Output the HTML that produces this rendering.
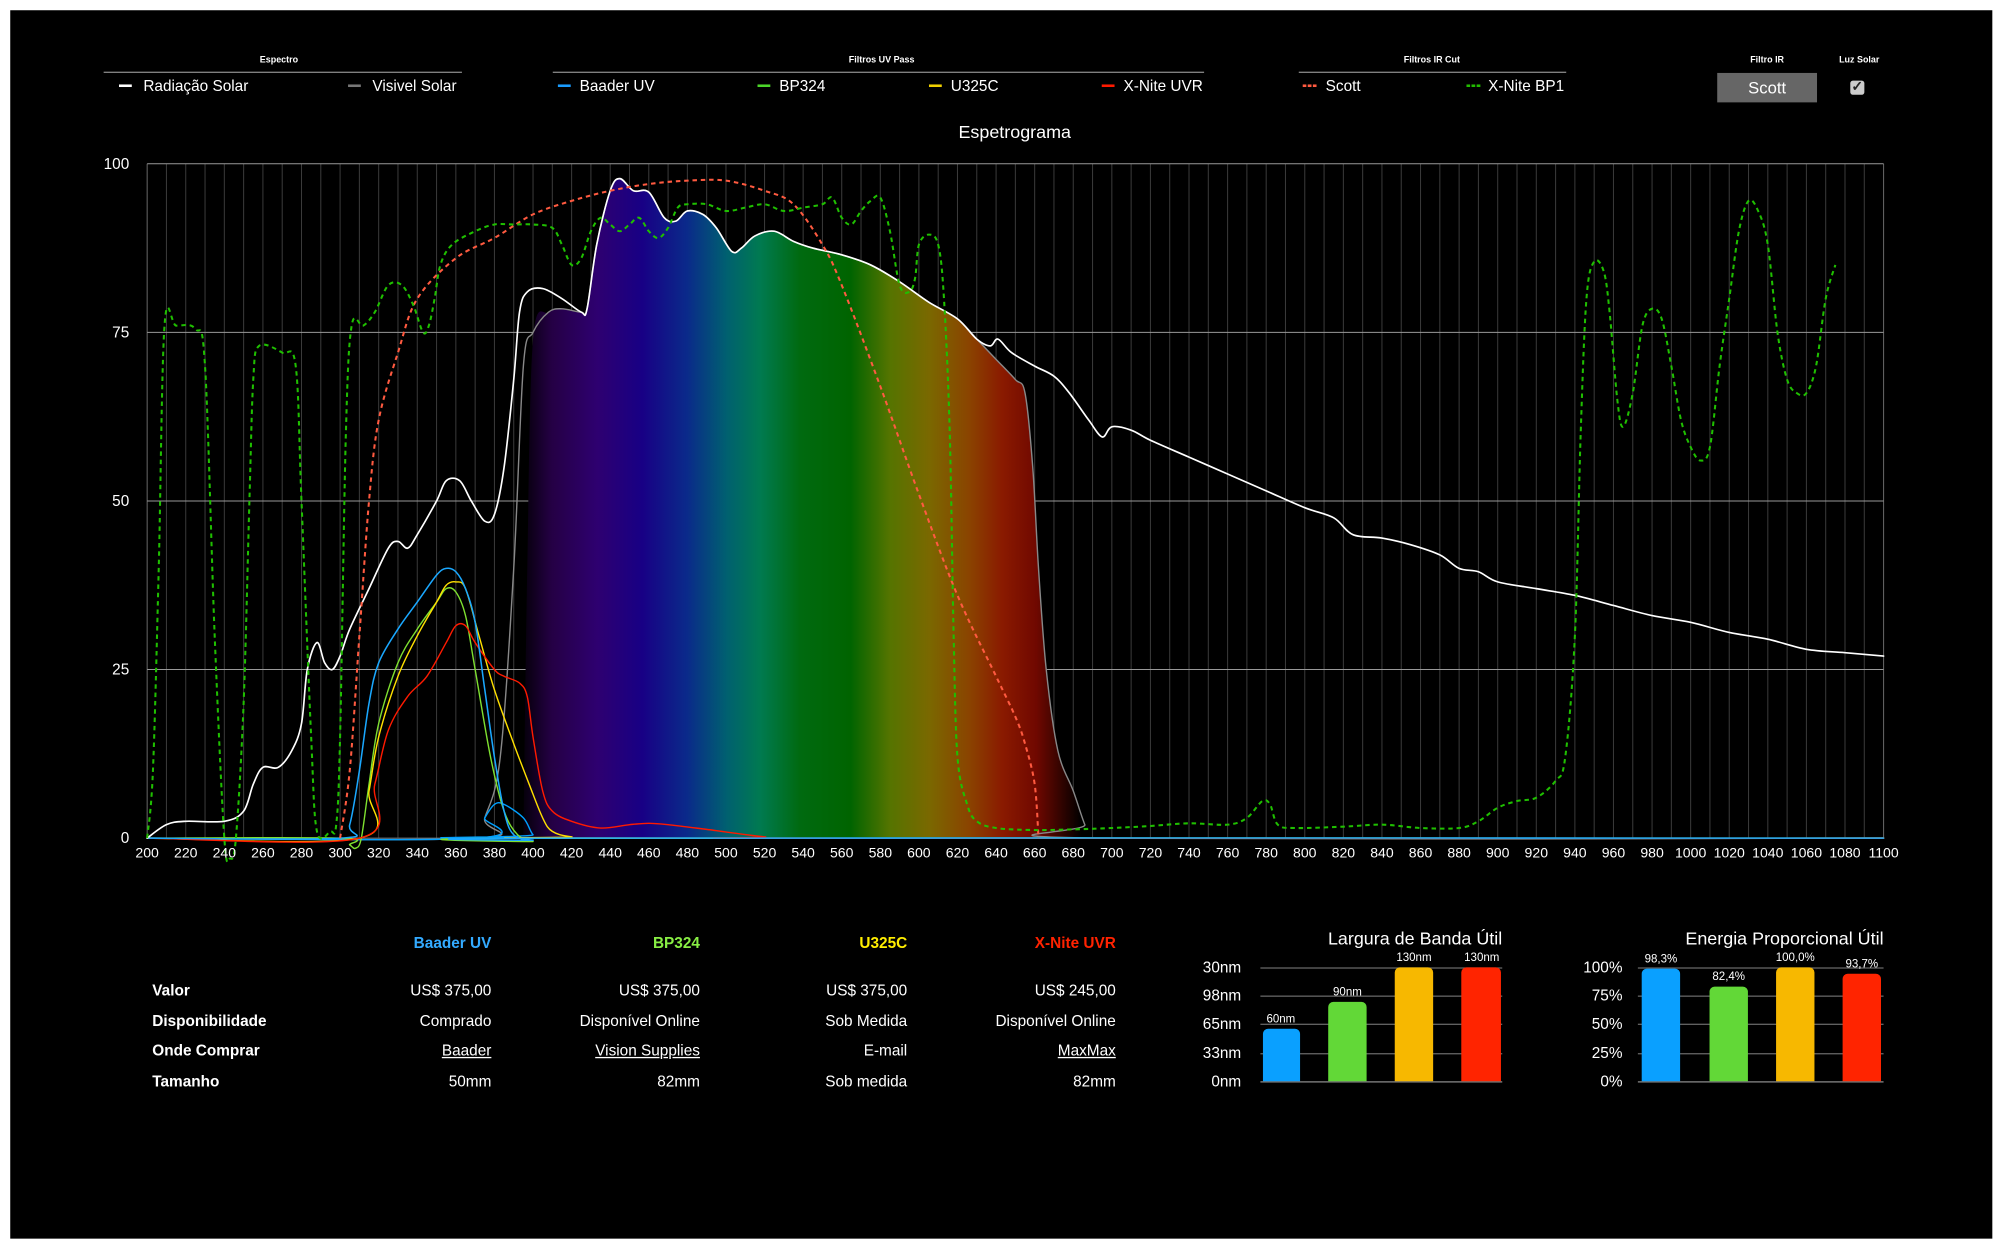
<!DOCTYPE html>
<html><head><meta charset="utf-8">
<style>
html,body{margin:0;padding:0;background:#fff;width:2000px;height:1249px;overflow:hidden}
#wrap{position:absolute;left:0;top:0;width:1563px;height:976px;transform:scale(1.27959);transform-origin:0 0;font-family:"Liberation Sans",Arial,sans-serif;color:#fff}
#panel{position:absolute;left:8px;top:8px;width:1549px;height:960px;background:#000}
.a{position:absolute;white-space:nowrap}
.sm{font-size:7px;font-weight:bold;transform:translateX(-50%)}
.ln{position:absolute;height:1px;background:#888}
.it{font-size:12px}
.d{position:absolute;width:10px;height:2px}
.dd{position:absolute;width:11px;height:2px;background-size:4px 2px;background-image:linear-gradient(90deg,currentColor 0 3px,transparent 3px)}
.r{text-align:right}
.tb{font-size:12px}
.bar{position:absolute;border-radius:4px 4px 0 0}
.bl{font-size:9px;transform:translateX(-50%)}
</style></head><body>
<div id="wrap"><div id="panel"></div>
<!-- legends -->
<div class="a sm" style="left:218px;top:44px">Espectro</div>
<div class="ln" style="left:81px;top:56px;width:280px"></div>
<div class="d" style="left:93px;top:66px;background:#fff"></div><div class="a it" style="left:112px;top:60px">Radiação Solar</div>
<div class="d" style="left:272px;top:66px;background:#777"></div><div class="a it" style="left:291px;top:60px">Visivel Solar</div>

<div class="a sm" style="left:689px;top:44px">Filtros UV Pass</div>
<div class="ln" style="left:432px;top:56px;width:509px"></div>
<div class="d" style="left:436px;top:66px;background:#1a9cff"></div><div class="a it" style="left:453px;top:60px">Baader UV</div>
<div class="d" style="left:592px;top:66px;background:#4cd62a"></div><div class="a it" style="left:609px;top:60px">BP324</div>
<div class="d" style="left:726px;top:66px;background:#f0d000"></div><div class="a it" style="left:743px;top:60px">U325C</div>
<div class="d" style="left:861px;top:66px;background:#ff1a00"></div><div class="a it" style="left:878px;top:60px">X-Nite UVR</div>

<div class="a sm" style="left:1119px;top:44px">Filtros IR Cut</div>
<div class="ln" style="left:1015px;top:56px;width:209px"></div>
<div class="dd" style="left:1018px;top:66px;color:#ff5a40"></div><div class="a it" style="left:1036px;top:60px">Scott</div>
<div class="dd" style="left:1146px;top:66px;color:#22bb00"></div><div class="a it" style="left:1163px;top:60px">X-Nite BP1</div>

<div class="a sm" style="left:1381px;top:44px">Filtro IR</div>
<div class="a" style="left:1342px;top:57px;width:78px;height:23px;background:#666;font-size:13px;text-align:center;line-height:24px">Scott</div>
<div class="a sm" style="left:1453px;top:44px">Luz Solar</div>
<div class="a" style="left:1446px;top:63px;width:11px;height:11px;background:#ccc;border-radius:2px;color:#222;font-size:11px;line-height:11px;text-align:center;font-weight:bold">✓</div>

<div class="a" style="left:793px;top:95px;font-size:14px;transform:translateX(-50%)">Espetrograma</div>

<svg id="ch" class="a" style="left:0;top:0" width="1563" height="976" xmlns="http://www.w3.org/2000/svg">
<defs>
<linearGradient id="sp" gradientUnits="userSpaceOnUse" x1="405" x2="845" y1="0" y2="0">
<stop offset="0" stop-color="#000"/>
<stop offset="0.06" stop-color="#250045"/>
<stop offset="0.14" stop-color="#2e0070"/>
<stop offset="0.22" stop-color="#180085"/>
<stop offset="0.30" stop-color="#0a2a8a"/>
<stop offset="0.37" stop-color="#006070"/>
<stop offset="0.43" stop-color="#007a50"/>
<stop offset="0.50" stop-color="#006a10"/>
<stop offset="0.59" stop-color="#006400"/>
<stop offset="0.66" stop-color="#557400"/>
<stop offset="0.73" stop-color="#7a6800"/>
<stop offset="0.80" stop-color="#8a4400"/>
<stop offset="0.86" stop-color="#8a1a00"/>
<stop offset="0.92" stop-color="#700800"/>
<stop offset="1" stop-color="#000"/>
</linearGradient>
</defs>
<g id="grid"></g>
<path id="fill" fill="url(#sp)"/>
<g id="curves" fill="none" stroke-linejoin="round" stroke-linecap="round"></g>
<g id="lbl" font-size="11" fill="#fff" font-family="Liberation Sans,Arial,sans-serif"></g>
</svg>

<!-- table -->
<div class="a tb r" style="right:1179px;top:730px;color:#33aaff;font-weight:bold">Baader UV</div>
<div class="a tb r" style="right:1016px;top:730px;color:#88ee44;font-weight:bold">BP324</div>
<div class="a tb r" style="right:854px;top:730px;color:#ffee00;font-weight:bold">U325C</div>
<div class="a tb r" style="right:691px;top:730px;color:#ff2200;font-weight:bold">X-Nite UVR</div>
<div class="a tb" style="left:119px;top:767px;font-weight:bold">Valor</div>
<div class="a tb" style="left:119px;top:791px;font-weight:bold">Disponibilidade</div>
<div class="a tb" style="left:119px;top:814px;font-weight:bold">Onde Comprar</div>
<div class="a tb" style="left:119px;top:838px;font-weight:bold">Tamanho</div>
<div class="a tb r" style="right:1179px;top:767px">US$ 375,00</div>
<div class="a tb r" style="right:1016px;top:767px">US$ 375,00</div>
<div class="a tb r" style="right:854px;top:767px">US$ 375,00</div>
<div class="a tb r" style="right:691px;top:767px">US$ 245,00</div>
<div class="a tb r" style="right:1179px;top:791px">Comprado</div>
<div class="a tb r" style="right:1016px;top:791px">Disponível Online</div>
<div class="a tb r" style="right:854px;top:791px">Sob Medida</div>
<div class="a tb r" style="right:691px;top:791px">Disponível Online</div>
<div class="a tb r" style="right:1179px;top:814px;text-decoration:underline">Baader</div>
<div class="a tb r" style="right:1016px;top:814px;text-decoration:underline">Vision Supplies</div>
<div class="a tb r" style="right:854px;top:814px">E-mail</div>
<div class="a tb r" style="right:691px;top:814px;text-decoration:underline">MaxMax</div>
<div class="a tb r" style="right:1179px;top:838px">50mm</div>
<div class="a tb r" style="right:1016px;top:838px">82mm</div>
<div class="a tb r" style="right:854px;top:838px">Sob medida</div>
<div class="a tb r" style="right:691px;top:838px">82mm</div>

<!-- bar chart 1 -->
<div class="a r" style="right:389px;top:725px;font-size:14px">Largura de Banda Útil</div>
<div class="ln" style="left:985px;top:756px;width:189px;background:#666"></div>
<div class="ln" style="left:985px;top:778px;width:189px;background:#666"></div>
<div class="ln" style="left:985px;top:800px;width:189px;background:#666"></div>
<div class="ln" style="left:985px;top:823px;width:189px;background:#666"></div>
<div class="ln" style="left:985px;top:845px;width:189px;background:#888"></div>
<div class="a r" style="right:593px;top:749px;font-size:12px">30nm</div>
<div class="a r" style="right:593px;top:771px;font-size:12px">98nm</div>
<div class="a r" style="right:593px;top:793px;font-size:12px">65nm</div>
<div class="a r" style="right:593px;top:816px;font-size:12px">33nm</div>
<div class="a r" style="right:593px;top:838px;font-size:12px">0nm</div>
<div class="bar" style="left:987px;top:804px;width:29px;height:41px;background:#0aa0ff"></div>
<div class="bar" style="left:1038px;top:783px;width:30px;height:62px;background:#62d837"></div>
<div class="bar" style="left:1090px;top:756px;width:30px;height:89px;background:#f7b800"></div>
<div class="bar" style="left:1142px;top:756px;width:31px;height:89px;background:#ff2400"></div>
<div class="a bl" style="left:1001px;top:791px">60nm</div>
<div class="a bl" style="left:1053px;top:770px">90nm</div>
<div class="a bl" style="left:1105px;top:743px">130nm</div>
<div class="a bl" style="left:1158px;top:743px">130nm</div>

<!-- bar chart 2 -->
<div class="a r" style="right:91px;top:725px;font-size:14px">Energia Proporcional Útil</div>
<div class="ln" style="left:1280px;top:756px;width:192px;background:#666"></div>
<div class="ln" style="left:1280px;top:778px;width:192px;background:#666"></div>
<div class="ln" style="left:1280px;top:800px;width:192px;background:#666"></div>
<div class="ln" style="left:1280px;top:823px;width:192px;background:#666"></div>
<div class="ln" style="left:1280px;top:845px;width:192px;background:#888"></div>
<div class="a r" style="right:295px;top:749px;font-size:12px">100%</div>
<div class="a r" style="right:295px;top:771px;font-size:12px">75%</div>
<div class="a r" style="right:295px;top:793px;font-size:12px">50%</div>
<div class="a r" style="right:295px;top:816px;font-size:12px">25%</div>
<div class="a r" style="right:295px;top:838px;font-size:12px">0%</div>
<div class="bar" style="left:1283px;top:757px;width:30px;height:88px;background:#0aa0ff"></div>
<div class="bar" style="left:1336px;top:771px;width:30px;height:74px;background:#62d837"></div>
<div class="bar" style="left:1388px;top:756px;width:30px;height:89px;background:#f7b800"></div>
<div class="bar" style="left:1440px;top:761px;width:30px;height:84px;background:#ff2400"></div>
<div class="a bl" style="left:1298px;top:744px">98,3%</div>
<div class="a bl" style="left:1351px;top:758px">82,4%</div>
<div class="a bl" style="left:1403px;top:743px">100,0%</div>
<div class="a bl" style="left:1455px;top:748px">93,7%</div>
</div>
<script>
(function(){
var NS="http://www.w3.org/2000/svg";
function X(n){return 115+(n-200)*1.5078;}
function Y(v){return 655-v*5.27;}
function el(t,a,p){var e=document.createElementNS(NS,t);for(var k in a)e.setAttribute(k,a[k]);p.appendChild(e);return e;}
var grid=document.getElementById('grid'),lbl=document.getElementById('lbl');
for(var n=200;n<=1100;n+=10){el('line',{x1:X(n),x2:X(n),y1:128,y2:655,stroke:(n==200||n==1100)?'#666':'#3a3a3a','stroke-width':0.8},grid);}
[0,25,50,75,100].forEach(function(v){el('line',{x1:115,x2:1472,y1:Y(v),y2:Y(v),stroke:v==0?'#777':'#999','stroke-width':0.8},grid);
var t=el('text',{x:101,y:Y(v)+4,'text-anchor':'end','font-size':12},lbl);t.textContent=v;});
for(var n=200;n<=1100;n+=20){var t=el('text',{x:X(n),y:670,'text-anchor':'middle'},lbl);t.textContent=n;}
function parse(s){var a=s.split(';').map(function(p){var q=p.split(',');return [X(+q[0]),Y(+q[1])];});return a;}
function smooth(P){var d='M'+P[0][0].toFixed(2)+','+P[0][1].toFixed(2);
for(var i=0;i<P.length-1;i++){var p0=P[i-1]||P[i],p1=P[i],p2=P[i+1],p3=P[i+2]||p2;
var c1=[p1[0]+(p2[0]-p0[0])/6,p1[1]+(p2[1]-p0[1])/6],c2=[p2[0]-(p3[0]-p1[0])/6,p2[1]-(p3[1]-p1[1])/6];
d+='C'+c1[0].toFixed(2)+','+c1[1].toFixed(2)+' '+c2[0].toFixed(2)+','+c2[1].toFixed(2)+' '+p2[0].toFixed(2)+','+p2[1].toFixed(2);}return d;}
var cur=document.getElementById('curves');
var white="200,0;210,2;220,2.5;240,2.5;250,4;255,8;260,10.5;268,10.5;275,13;280,17;283,25;288,29;292,26;296,25;300,27;305,31;315,37;325,43;330,44;335,43;340,45;350,50;355,53;362,53;368,50;375,47;380,48;385,55;390,68;393,78;397,81;405,81.5;415,80;425,78;428,78.5;433,88;440,96;445,97.8;452,96;460,95.8;468,92;474,91.5;480,93;488,92.5;495,90.5;503,87;508,87.5;515,89.3;525,90;535,88.5;545,87.5;560,86.5;575,85;590,82.5;605,79.5;620,77;630,74;637,73;641,74;648,72;660,70;670,68.5;678,66;688,62;695,59.5;700,61;710,60.5;720,59;740,56.5;760,54;780,51.5;800,49;815,47.5;825,45;840,44.5;855,43.5;870,42;880,40;890,39.5;900,38;920,37;940,36;960,34.5;980,33;1000,32;1020,30.5;1040,29.5;1060,28;1080,27.5;1100,27";
var gray="200,0;370,0;375,3;383,12;390,40;395,70;400,75;408,78;415,78.5;425,78;428,78.5;433,88;440,96;445,97.8;452,96;460,95.8;468,92;474,91.5;480,93;488,92.5;495,90.5;503,87;508,87.5;515,89.3;525,90;535,88.5;545,87.5;560,86.5;575,85;590,82.5;605,79.5;620,77;630,74;640,71;650,68;655,66;659,55;662,40;666,25;672,13;680,7;686,2;690,0;1100,0";
var fillS="395,0;397,40;400,74;408,78;415,78.5;425,78;428,78.5;433,88;440,96;445,97.8;452,96;460,95.8;468,92;474,91.5;480,93;488,92.5;495,90.5;503,87;508,87.5;515,89.3;525,90;535,88.5;545,87.5;560,86.5;575,85;590,82.5;605,79.5;620,77;630,74;640,71;650,68;655,66;659,55;662,40;666,25;672,13;680,7;686,2;690,0";
var fp=parse(fillS);document.getElementById('fill').setAttribute('d',smooth(fp)+'Z');
var curves=[
[gray,'#888',1.1,null],
["200,0;370,0;375,3;380,5;385,5;395,3;400,0.5;405,0;1100,0",'#00a0ff',1.1,null],
["200,0;300,0;305,-1;308,-1.5;311,0;315,8;320,17;330,26;340,31;350,35;355,37;360,36.5;365,33;370,25;378,12;385,4;392,0.5;400,-0.5;405,0;1100,0",'#7ee030',1.1,null],
["200,0;310,0;315,7;320,15;330,24;340,30;350,35;355,37.5;360,38;365,37;372,30;380,22;390,14;398,8;405,3;410,1;420,0.2;440,0;1100,0",'#ffe000',1.1,null],
["200,0;310,0;318,8;325,16;335,21;345,24;355,29;360,31.5;365,31.5;370,29;380,25;385,24;393,23;397,21;400,15;405,7;410,4;420,2.5;435,1.5;450,2;460,2.2;470,2;490,1.3;520,0.2;540,0;1100,0",'#ff1a00',1.1,null],
["200,0;300,0;305,2;310,10;315,20;320,26;330,31;340,35;350,39;355,40;360,39.5;365,37;370,32;375,22;380,12;385,4;390,0.5;400,-0.3;410,0;1100,0",'#1aa8ff',1.2,null],
[white,'#fff',1.3,null],
["300,0;305,10;310,30;315,50;320,62;330,72;340,80;360,86;380,89;400,92.5;420,94.5;440,96;460,97;480,97.5;500,97.5;520,96;535,94;550,88;560,82;580,67;600,51;620,36;640,24;650,18;655,14;660,8;662,0",'#ff5a40',1.6,'3.5 3'],
["200,0;203,10;206,40;209,76;215,76;225,75.5;230,70;235,30;240,0;243,-3;246,0;250,20;253,50;255,68;258,73;270,72;277,70;280,50;285,15;288,1;295,1;298,2;300,15;303,60;306,76;312,76;318,78;325,82;332,82;338,79;343,75;346,76;349,80;352,85;358,88;370,90;380,91;390,91;400,91;410,90.5;415,88;420,85;425,86;430,90;435,92;440,91;445,90;450,91;455,92;460,90;465,89;470,90.5;475,93.5;480,94;490,94;500,93;510,93.5;520,94;530,93;540,93.5;550,94;555,95;560,92;565,91;570,93;575,94.5;580,95;585,90;590,82;595,81;598,83;600,88;605,89.5;610,88;613,80;616,60;618,30;620,12;625,5;630,2.5;640,1.5;660,1.2;680,1.3;700,1.5;720,1.8;740,2.2;760,2;770,3;778,5.5;782,5;786,2;795,1.5;820,1.7;840,2;860,1.5;880,1.5;890,2.5;900,4.5;910,5.5;920,6;930,8.5;935,12;940,30;943,60;946,80;950,85.5;955,84;958,78;962,65;965,61;970,66;975,76;980,78.5;985,77;990,70;995,62;1000,58;1005,56;1010,58;1015,70;1020,80;1025,90;1030,94.5;1035,93;1040,88;1045,75;1050,68;1055,66;1060,66;1065,70;1070,80;1075,85",'#1fbf00',1.6,'3.5 3']
];
curves.forEach(function(c){var a={d:smooth(parse(c[0])),stroke:c[1],'stroke-width':c[2]};if(c[3]){a['stroke-dasharray']=c[3];a['stroke-linecap']='butt';}el('path',a,cur);});
})();
</script>
</body></html>
